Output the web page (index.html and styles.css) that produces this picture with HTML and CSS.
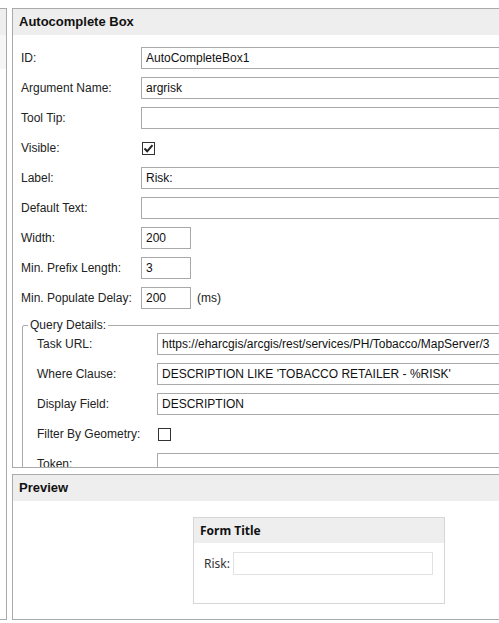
FILE: index.html
```html
<!DOCTYPE html>
<html lang="en">
<head>
  <meta charset="UTF-8">
  <title>Autocomplete Box</title>
  <link rel="stylesheet" href="styles.css">
</head>
<body>

  <div class="layout">
    <div class="side">
      <div class="side-head"></div>
      <div class="side-item"></div>
    </div>

    <div class="main">
      <div class="panel editor">
        <div class="panel-head">Autocomplete Box</div>
        <div class="panel-body">
          <div class="form-grid">
            <label>ID:</label>
            <input type="text" value="AutoCompleteBox1">

            <label>Argument Name:</label>
            <input type="text" value="argrisk">

            <label>Tool Tip:</label>
            <input type="text" value="">

            <label>Visible:</label>
            <span class="check">
              <svg width="11" height="11" viewBox="0 0 11 11"><path d="M1.5 5.5 L4.2 8.3 L9.5 2.2" fill="none" stroke="#222" stroke-width="2"/></svg>
            </span>

            <label>Label:</label>
            <input type="text" value="Risk:">

            <label>Default Text:</label>
            <input type="text" value="">

            <label>Width:</label>
            <input type="text" class="short" value="200">

            <label>Min. Prefix Length:</label>
            <input type="text" class="short" value="3">

            <label>Min. Populate Delay:</label>
            <div class="with-unit">
              <input type="text" class="short" value="200">
              <span>(ms)</span>
            </div>
          </div>

          <fieldset class="query">
            <legend>Query Details:</legend>
            <div class="form-grid">
              <label>Task URL:</label>
              <input type="text" value="https://eharcgis/arcgis/rest/services/PH/Tobacco/MapServer/3">

              <label>Where Clause:</label>
              <input type="text" value="DESCRIPTION LIKE 'TOBACCO RETAILER - %RISK'">

              <label>Display Field:</label>
              <input type="text" value="DESCRIPTION">

              <label>Filter By Geometry:</label>
              <span class="check"></span>

              <label>Token:</label>
              <input type="text" value="">
            </div>
          </fieldset>
        </div>
      </div>

      <div class="panel preview">
        <div class="panel-head">Preview</div>
        <div class="preview-body">
          <div class="form-box">
            <div class="form-box-head">Form Title</div>
            <div class="form-box-row">
              <span>Risk:</span>
              <input type="text" value="">
            </div>
          </div>
        </div>
      </div>
    </div>
  </div>

</body>
</html>
```

FILE: styles.css
```css
body {
  margin: 0;
  padding-top: 8px;
  font-family: "Liberation Sans", Arial, sans-serif;
  font-size: 12px;
  color: #222;
  background: #fff;
  overflow: hidden;
}
.layout {
  display: flex;
  gap: 5px;
  align-items: flex-start;
}
.side {
  flex-shrink: 0;
  width: 7px;
  height: 612px;
  box-sizing: border-box;
  border: 1px solid #aaa;
  border-left: none;
}
.side-head {
  height: 26px;
  background: #eee;
}
.side-item {
  height: 34px;
  background: #f6f6f6;
}
.main {
  width: 640px;
  flex-shrink: 0;
}
.panel {
  border: 1px solid #aaa;
  box-sizing: border-box;
}
.editor {
  height: 460px;
}
.preview {
  height: 146px;
  margin-top: 6px;
}
.panel-head {
  height: 26px;
  line-height: 26px;
  padding-left: 6px;
  background: #eee;
  font-weight: bold;
  font-size: 13px;
  color: #111;
}
.panel-body {
  height: 432px;
  overflow: hidden;
  padding: 12px 0 0 8px;
  box-sizing: border-box;
}
.form-grid {
  display: grid;
  grid-template-columns: 120px 1fr;
  grid-auto-rows: 22px;
  row-gap: 8px;
  align-items: center;
}
.form-grid input {
  height: 22px;
  box-sizing: border-box;
  border: 1px solid #a9a9a9;
  padding: 0 4px;
  font-family: inherit;
  font-size: 12px;
  color: #111;
  width: 100%;
  margin: 0;
}
.form-grid input.short {
  width: 50px;
}
.with-unit {
  display: flex;
  align-items: center;
  gap: 6px;
}
.check {
  display: flex;
  align-items: center;
  justify-content: center;
  width: 13px;
  height: 13px;
  box-sizing: border-box;
  border: 1px solid #333;
  margin-left: 1px;
  background: #fff;
}
.query {
  margin: 9px 0 0 1px;
  padding: 0 0 40px 5px;
  border: 1px solid #aaa;
  border-radius: 2px;
}
.query legend {
  padding: 0 2px;
  line-height: 14px;
}
.query .form-grid {
  margin-left: 9px;
  padding-top: 1px;
}
.preview-body {
  padding: 16px 0 0 180px;
}
.form-box {
  width: 252px;
  height: 87px;
  box-sizing: border-box;
  border: 1px solid #d6d6d6;
  font-family: "Noto Sans", "Open Sans", sans-serif;
  font-size: 12px;
  color: #333;
}
.form-box-head {
  height: 25px;
  line-height: 25px;
  padding-left: 6px;
  background: #eee;
  font-weight: bold;
  font-size: 12px;
  color: #111;
}
.form-box-row {
  display: flex;
  align-items: center;
  gap: 3px;
  padding: 9px 0 0 10px;
}
.form-box-row input {
  width: 200px;
  height: 23px;
  box-sizing: border-box;
  border: 1px solid #e2e2e2;
  margin: 0;
}
```
